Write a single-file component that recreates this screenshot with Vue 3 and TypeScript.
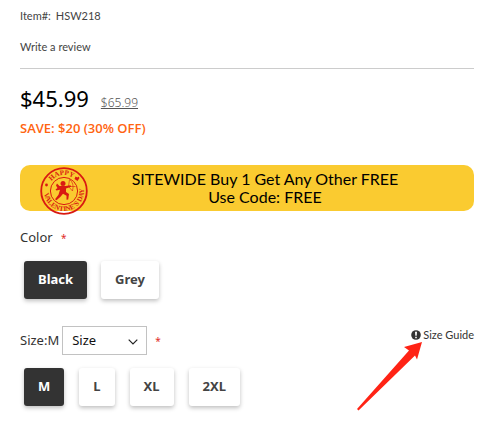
<script setup lang="ts">
import { ref } from 'vue'

const colors: string[] = ['Black', 'Grey']
const sizes: string[] = ['M', 'L', 'XL', '2XL']
const color = ref('Black')
const size = ref('M')
</script>

<template>
  <main class="product">
    <p class="meta"><span>Item#:</span><span>HSW218</span></p>
    <a class="meta review" href="#review">Write a review</a>

    <section class="pricing">
      <div class="prices">
        <strong class="price">$45.99</strong>
        <del class="was">$65.99</del>
      </div>
      <p class="save">SAVE: $20 (30% OFF)</p>
    </section>

    <section class="promo">
      <svg class="stamp" viewBox="0 0 50 50" aria-hidden="true">
        <defs>
          <path id="arc-top" d="M9 25a16 16 0 0 1 32 0" />
          <path id="arc-bottom" d="M6.200 18.200A20 20 0 1 0 42.300 15" />
        </defs>
        <g fill="none" stroke="#d91a12">
          <circle cx="25" cy="25" r="22.800" stroke-width="1.800" />
          <circle cx="25" cy="25" r="13.600" stroke-width="1" />
        </g>
        <g class="stamp-text">
          <text><textPath href="#arc-top" startOffset="45%" text-anchor="middle">HAPPY</textPath></text>
          <text><textPath href="#arc-bottom" startOffset="51%" text-anchor="middle">VALENTINE'S DAY</textPath></text>
        </g>
        <g fill="#d91a12">
          <circle cx="7.500" cy="19" r="1.400" />
          <path d="M36.500 10.500l2 1 1-1 1 1.500-2 3-3-2z" />
          <circle cx="24" cy="17.400" r="2.500" />
          <path d="M22.500 20h4l5-.8.600 1.500-5.100 1.800v3.500l3 2-.8 5.500-1.700.2v-4l-3.500-2-2.500 3-4 3.500-1.500-1 3.500-4.500 1.500-5-3.500.8-1-1 2-1.500-1.500-2.500 1-2 2.500 2.500z" />
        </g>
        <path d="M30.500 13.500q5 3.500 3 11.500M30.500 13.500l-1 7 4 4.500M27 20.500h9.500" fill="none" stroke="#d91a12" stroke-width=".6" />
      </svg>
      <p class="promo-text">SITEWIDE Buy 1 Get Any Other FREE<br />Use Code: FREE</p>
    </section>

    <section class="option">
      <h2 id="color-label" class="label">Color <span class="required">*</span></h2>
      <div class="choices" role="group" aria-labelledby="color-label">
        <button
          v-for="c in colors"
          :key="c"
          type="button"
          class="choice"
          :class="{ active: color === c }"
          :aria-pressed="color === c"
          @click="color = c"
        >{{ c }}</button>
      </div>
    </section>

    <section class="option">
      <div class="size-row">
        <label class="label size-label" for="size">Size:{{ size }}</label>
        <div class="select-box">
          <select id="size">
            <option>Size</option>
          </select>
          <svg class="chevron" viewBox="0 0 10 6" aria-hidden="true">
            <path d="M.7.7L5 5 9.300.7" fill="none" stroke="#222" stroke-width="1.200" />
          </svg>
        </div>
        <span class="required">*</span>
        <a class="guide" href="#size-guide">
          <svg class="info" viewBox="0 0 10 10" aria-hidden="true">
            <circle cx="5" cy="5" r="4.800" fill="#333" />
            <path d="M4 1.800h2L5.700 5.800H4.300zM4.200 6.700h1.600v1.500H4.200z" fill="#fff" />
          </svg>
          Size Guide
          <svg class="pointer" viewBox="0 0 66 69" aria-hidden="true">
            <path d="M65 0L47 5l5 3.500L0 67l1.500 1.500L58 13.500l2 4z" fill="#ff2315" />
          </svg>
        </a>
      </div>
      <div class="choices sizes" role="group" aria-label="Size">
        <button
          v-for="s in sizes"
          :key="s"
          type="button"
          class="choice"
          :class="{ active: size === s }"
          :aria-pressed="size === s"
          @click="size = s"
        >{{ s }}</button>
      </div>
    </section>
  </main>
</template>

<style>
body {
  margin: 0;
  background: #fff;
}
</style>

<style scoped>
.product {
  display: flex;
  flex-direction: column;
  padding: 8px 23px 12px 20px;
  color: #333;
  font-family: "Noto Sans", "Open Sans", sans-serif;
}

p,
h2 {
  margin: 0;
}

.meta {
  display: flex;
  gap: 5px;
  font: 11px/16px Lato, sans-serif;
  color: #444;
  text-decoration: none;
}

.review {
  padding: 15px 0 13px;
  border-bottom: 1px solid #ccc;
}

.pricing {
  padding-top: 14px;
}

.prices {
  display: flex;
  align-items: baseline;
  gap: 12px;
  line-height: 30px;
}

.price {
  font-size: 22px;
  font-weight: 400;
  color: #000;
}

.was {
  font: 300 12px/16px "Noto Sans", sans-serif;
  color: #555;
  text-decoration: underline;
}

.save {
  padding-top: 6px;
  font: 600 13px/18px "Open Sans", sans-serif;
  color: #ff6410;
}

.promo {
  position: relative;
  display: flex;
  justify-content: center;
  margin-top: 28px;
  padding: 5px 0 5px 36px;
  border-radius: 10px;
  background: #facb30;
}

.stamp {
  position: absolute;
  left: 19px;
  top: 1px;
  width: 50px;
  height: 50px;
}

.stamp-text {
  font: 700 7px "Liberation Serif", serif;
  fill: #d91a12;
}

.promo-text {
  font: 16px/18px Lato, sans-serif;
  color: #000;
  text-align: center;
}

.option {
  padding-top: 16px;
}

.label {
  font-size: 13px;
  line-height: 20px;
  font-weight: 400;
}

.size-label {
  padding-bottom: 2px;
}

.required {
  margin-left: 5px;
  font-size: 10px;
  color: #e02b27;
}

.choices {
  display: flex;
  gap: 14px;
  padding: 13px 4px 0;
}

.choices.sizes {
  gap: 15px;
}

.choice {
  height: 38px;
  padding: 0 14px 2px;
  border: 0;
  border-radius: 3px;
  background: #fff;
  box-shadow: 0 2px 4px rgba(0, 0, 0, 0.25);
  color: #444;
  font: 700 13px/20px "Noto Sans", sans-serif;
}

.choice.active {
  background: #333;
  color: #fff;
}

.size-row {
  display: flex;
  align-items: center;
  gap: 3px;
  padding-top: 11px;
}

.select-box {
  position: relative;
}

select {
  display: block;
  appearance: none;
  width: 85px;
  height: 29px;
  padding: 0 9px 2px;
  border: 1px solid #c2c2c2;
  border-radius: 0;
  background: #fff;
  color: #111;
  font: 13px/20px "Noto Sans", sans-serif;
}

.chevron {
  position: absolute;
  right: 9px;
  top: 13px;
  width: 10px;
  height: 6px;
  pointer-events: none;
}

.guide {
  position: relative;
  display: flex;
  align-items: center;
  gap: 2px;
  margin-left: auto;
  padding-bottom: 12px;
  color: #333;
  font: 11px/16px Lato, sans-serif;
  text-decoration: none;
}

.info {
  width: 10px;
  height: 10px;
}

.pointer {
  position: absolute;
  right: 51px;
  top: 15px;
  width: 66px;
  height: 69px;
  pointer-events: none;
}
</style>
